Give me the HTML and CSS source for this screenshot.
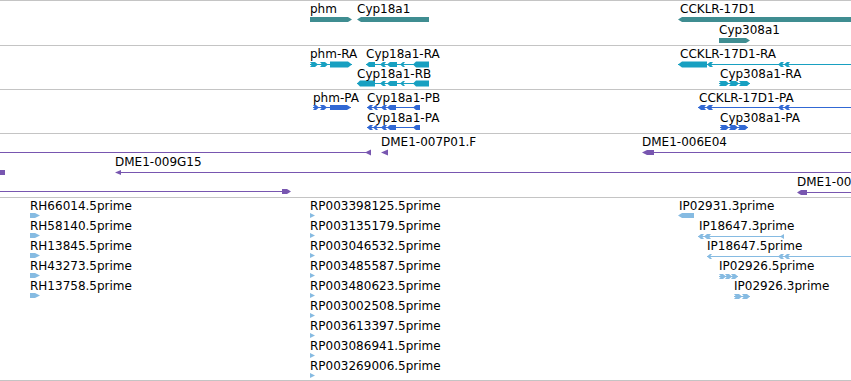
FILE: index.html
```html
<!DOCTYPE html>
<html>
<head>
<meta charset="utf-8">
<link rel="stylesheet" href="styles.css">
</head>
<body>
<div class="browser">
  <div class="track t-genes">
    <svg class="canvas" width="851" height="44" viewBox="0 1 851 44">
      <g class="teal">
        <polygon points="310,17 348,17 352,19.5 348,22 310,22"/>
        <polygon points="357,19.5 361,17 429,17 429,22 361,22"/>
        <polygon points="678,19.5 682,17 851,17 851,22 682,22"/>
        <polygon points="719,38 746,38 750,40.5 746,43 719,43"/>
      </g>
      <text class="lbl" x="310" y="13">phm</text>
      <text class="lbl" x="357" y="13">Cyp18a1</text>
      <text class="lbl" x="680" y="13">CCKLR-17D1</text>
      <text class="lbl" x="719" y="34">Cyp308a1</text>
    </svg>
  </div>

  <div class="track t-transcripts">
    <svg class="canvas" width="851" height="43" viewBox="0 46 851 43">
      <g class="cyan" transform="translate(0,0.5)">
        <!-- phm-RA -->
        <rect x="310" y="63.5" width="42" height="1"/>
        <polygon points="310,61.5 315,61.5 318,64 315,66.5 310,66.5 312,64"/>
        <polygon points="320,61.5 325,61.5 328,64 325,66.5 320,66.5 322,64"/>
        <polygon points="330,61 348,61 352,64 348,67 330,67"/>
        <!-- Cyp18a1-RA -->
        <rect x="366" y="63.5" width="63" height="1"/>
        <polygon points="366,64 369,61.5 375,61.5 375,66.5 369,66.5"/>
        <polygon points="380,64 383,61.5 386,61.5 384,64 386,66.5 383,66.5"/>
        <polygon points="387,64 390,61.5 397,61.5 397,66.5 390,66.5"/>
        <polygon points="400,64 403,61.5 405,61.5 403,64 405,66.5 403,66.5"/>
        <polygon points="413,64 416,61 429,61 429,67 416,67"/>
        <!-- Cyp18a1-RB -->
        <rect x="357" y="82.5" width="72" height="1"/>
        <polygon points="357,83 360,80 375,80 375,86 360,86"/>
        <polygon points="380,83 383,80.5 386,80.5 384,83 386,85.5 383,85.5"/>
        <polygon points="387,83 390,80.5 397,80.5 397,85.5 390,85.5"/>
        <polygon points="400,83 403,80.5 405,80.5 403,83 405,85.5 403,85.5"/>
        <polygon points="413,83 416,80 429,80 429,86 416,86"/>
        <!-- CCKLR-17D1-RA -->
        <rect x="678" y="63.5" width="173" height="1"/>
        <polygon points="678,64 682,61 707,61 707,67 682,67"/>
        <polygon points="707,64 710,61.5 713,61.5 711,64 713,66.5 710,66.5"/>
        <polygon points="778,64 781,61.5 784,61.5 782,64 784,66.5 781,66.5"/>
        <polygon points="784,64 787,61.5 790,61.5 788,64 790,66.5 787,66.5"/>
        <!-- Cyp308a1-RA -->
        <rect x="719" y="82.5" width="31" height="1"/>
        <polygon points="719,80.5 726,80.5 729,83 726,85.5 719,85.5 721,83"/>
        <polygon points="729,80.5 736,80.5 739,83 736,85.5 729,85.5 731,83"/>
        <polygon points="739,80.5 747,80.5 750,83 747,85.5 739,85.5 741,83"/>
      </g>
      <text class="lbl" x="310" y="58">phm-RA</text>
      <text class="lbl" x="366" y="58">Cyp18a1-RA</text>
      <text class="lbl" x="357" y="78">Cyp18a1-RB</text>
      <text class="lbl" x="680" y="58">CCKLR-17D1-RA</text>
      <text class="lbl" x="720" y="78">Cyp308a1-RA</text>
    </svg>
  </div>

  <div class="track t-proteins">
    <svg class="canvas" width="851" height="43" viewBox="0 90 851 43">
      <g class="blue" transform="translate(0,0.5)">
        <!-- phm-PA -->
        <rect x="313" y="106.5" width="38" height="1"/>
        <polygon points="313,104.5 316,104.5 319,107 316,109.5 313,109.5 315,107"/>
        <polygon points="320,104.5 324,104.5 327,107 324,109.5 320,109.5 322,107"/>
        <polygon points="330,104.5 347,104.5 351,107 347,109.5 330,109.5"/>
        <!-- Cyp18a1-PB -->
        <rect x="367" y="106.5" width="53" height="1"/>
        <polygon points="367,107 370,104.5 373,104.5 371,107 373,109.5 370,109.5"/>
        <polygon points="373,107 376,104.5 378,104.5 376,107 378,109.5 376,109.5"/>
        <polygon points="381,107 384,104.5 387,104.5 385,107 387,109.5 384,109.5"/>
        <polygon points="387,107 390,104.5 396,104.5 396,109.5 390,109.5"/>
        <polygon points="413,107 416,104.5 420,104.5 420,109.5 416,109.5"/>
        <!-- Cyp18a1-PA -->
        <rect x="367" y="126.5" width="53" height="1"/>
        <polygon points="367,127 370,124.5 373,124.5 371,127 373,129.5 370,129.5"/>
        <polygon points="373,127 376,124.5 378,124.5 376,127 378,129.5 376,129.5"/>
        <polygon points="381,127 384,124.5 387,124.5 385,127 387,129.5 384,129.5"/>
        <polygon points="387,127 390,124.5 396,124.5 396,129.5 390,129.5"/>
        <polygon points="413,127 416,124.5 420,124.5 420,129.5 416,129.5"/>
        <!-- CCKLR-17D1-PA -->
        <rect x="698" y="106.5" width="153" height="1"/>
        <polygon points="698,107 701,104.5 706,104.5 704,107 706,109.5 701,109.5"/>
        <polygon points="706,107 709,104.5 713,104.5 711,107 713,109.5 709,109.5"/>
        <polygon points="778,107 781,104.5 784,104.5 782,107 784,109.5 781,109.5"/>
        <polygon points="784,107 787,104.5 790,104.5 788,107 790,109.5 787,109.5"/>
        <!-- Cyp308a1-PA -->
        <rect x="720" y="126.5" width="28" height="1"/>
        <polygon points="720,124.5 726,124.5 729,127 726,129.5 720,129.5 722,127"/>
        <polygon points="729,124.5 735,124.5 738,127 735,129.5 729,129.5 731,127"/>
        <polygon points="738,124.5 745,124.5 748,127 745,129.5 738,129.5 740,127"/>
      </g>
      <text class="lbl" x="313" y="102">phm-PA</text>
      <text class="lbl" x="367" y="102">Cyp18a1-PB</text>
      <text class="lbl" x="367" y="122">Cyp18a1-PA</text>
      <text class="lbl" x="699" y="102">CCKLR-17D1-PA</text>
      <text class="lbl" x="720" y="122">Cyp308a1-PA</text>
    </svg>
  </div>

  <div class="track t-clones">
    <svg class="canvas" width="851" height="63" viewBox="0 134 851 63">
      <g class="purple">
        <rect x="0" y="152" width="371" height="1"/>
        <polygon points="365,152.5 371,149.5 371,155.5"/>
        <polygon points="381,152.5 388,149.5 388,155.5"/>
        <polygon points="642,152.5 647,150 654,150 654,155 647,155"/>
        <rect x="654" y="152" width="197" height="1"/>
        <rect x="0" y="170" width="5" height="5"/>
        <polygon points="115,172.5 121,170 121,175"/>
        <rect x="121" y="172" width="730" height="1"/>
        <rect x="0" y="191" width="284" height="1"/>
        <polygon points="282,189 287,189 291,191.5 287,194 282,194"/>
        <polygon points="797,192.5 801,190 807,190 807,195 801,195"/>
        <rect x="807" y="192" width="44" height="1"/>
      </g>
      <text class="lbl" x="381" y="146">DME1-007P01.F</text>
      <text class="lbl" x="642" y="146">DME1-006E04</text>
      <text class="lbl" x="115" y="166">DME1-009G15</text>
      <text class="lbl" x="797" y="186">DME1-008C02</text>
    </svg>
  </div>

  <div class="track t-ests">
    <svg class="canvas" width="851" height="182" viewBox="0 198 851 182">
      <g class="sky">
        <polygon points="30,213 35,213 40,215.5 35,218 30,218"/>
        <polygon points="30,233 35,233 40,235.5 35,238 30,238"/>
        <polygon points="30,253 35,253 40,255.5 35,258 30,258"/>
        <polygon points="30,273 35,273 40,275.5 35,278 30,278"/>
        <polygon points="30,293 35,293 40,295.5 35,298 30,298"/>

        <polygon points="310,213 315,215.5 310,218"/>
        <polygon points="310,233 315,235.5 310,238"/>
        <polygon points="310,253 315,255.5 310,258"/>
        <polygon points="310,273 315,275.5 310,278"/>
        <polygon points="310,293 315,295.5 310,298"/>
        <polygon points="310,313 315,315.5 310,318"/>
        <polygon points="310,333 315,335.5 310,338"/>
        <polygon points="310,353 315,355.5 310,358"/>
        <polygon points="310,373 315,375.5 310,378"/>

        <polygon points="678,215.5 682,213 694,213 694,218 682,218"/>
      </g>
      <g class="sky" transform="translate(0,0.5)">
        <rect x="698" y="235.5" width="86" height="1"/>
        <polygon points="698,236 701,233.5 704,233.5 702,236 704,238.5 701,238.5"/>
        <polygon points="704,236 707,233.5 711,233.5 709,236 711,238.5 707,238.5"/>
        <polygon points="780,236 784,233.5 784,238.5"/>

        <rect x="707" y="255.5" width="144" height="1"/>
        <polygon points="707,256 710,253.5 712,253.5 710,256 712,258.5 710,258.5"/>
        <polygon points="778,256 781,253.5 784,253.5 782,256 784,258.5 781,258.5"/>
        <polygon points="784,256 787,253.5 790,253.5 788,256 790,258.5 787,258.5"/>

        <rect x="719" y="275.5" width="19" height="1"/>
        <polygon points="719,273.5 723,273.5 726,276 723,278.5 719,278.5 721,276"/>
        <polygon points="725,273.5 729,273.5 732,276 729,278.5 725,278.5 727,276"/>
        <polygon points="731,273.5 735,273.5 738,276 735,278.5 731,278.5 733,276"/>

        <rect x="734" y="295.5" width="16" height="1"/>
        <polygon points="734,293.5 739,293.5 742,296 739,298.5 734,298.5 736,296"/>
        <polygon points="742,293.5 747,293.5 750,296 747,298.5 742,298.5 744,296"/>
      </g>
      <text class="lbl" x="30" y="210">RH66014.5prime</text>
      <text class="lbl" x="30" y="230">RH58140.5prime</text>
      <text class="lbl" x="30" y="250">RH13845.5prime</text>
      <text class="lbl" x="30" y="270">RH43273.5prime</text>
      <text class="lbl" x="30" y="290">RH13758.5prime</text>

      <text class="lbl" x="310" y="210">RP003398125.5prime</text>
      <text class="lbl" x="310" y="230">RP003135179.5prime</text>
      <text class="lbl" x="310" y="250">RP003046532.5prime</text>
      <text class="lbl" x="310" y="270">RP003485587.5prime</text>
      <text class="lbl" x="310" y="290">RP003480623.5prime</text>
      <text class="lbl" x="310" y="310">RP003002508.5prime</text>
      <text class="lbl" x="310" y="330">RP003613397.5prime</text>
      <text class="lbl" x="310" y="350">RP003086941.5prime</text>
      <text class="lbl" x="310" y="370">RP003269006.5prime</text>

      <text class="lbl" x="679" y="210">IP02931.3prime</text>
      <text class="lbl" x="699" y="230">IP18647.3prime</text>
      <text class="lbl" x="707" y="250">IP18647.5prime</text>
      <text class="lbl" x="719" y="270">IP02926.5prime</text>
      <text class="lbl" x="734" y="290">IP02926.3prime</text>
    </svg>
  </div>
</div>
</body>
</html>
```
FILE: styles.css
```css
html, body {
  margin: 0;
  padding: 0;
  background: #ffffff;
}

body {
  width: 851px;
  height: 381px;
  overflow: hidden;
  font-family: "DejaVu Sans", "Liberation Sans", sans-serif;
  font-size: 12px;
}

.browser {
  display: flex;
  flex-direction: column;
  border-top: 1px solid #c4c4c4;
}

.track {
  border-bottom: 1px solid #c4c4c4;
  overflow: hidden;
}

.canvas {
  display: block;
}

.lbl {
  font-family: "DejaVu Sans", "Liberation Sans", sans-serif;
  font-size: 12px;
  fill: #000000;
}

.teal { fill: #3f8d91; }
.cyan { fill: #18a0c1; }
.blue { fill: #3168d4; }
.purple { fill: #7856b0; }
.sky { fill: #86bbe2; }
```
